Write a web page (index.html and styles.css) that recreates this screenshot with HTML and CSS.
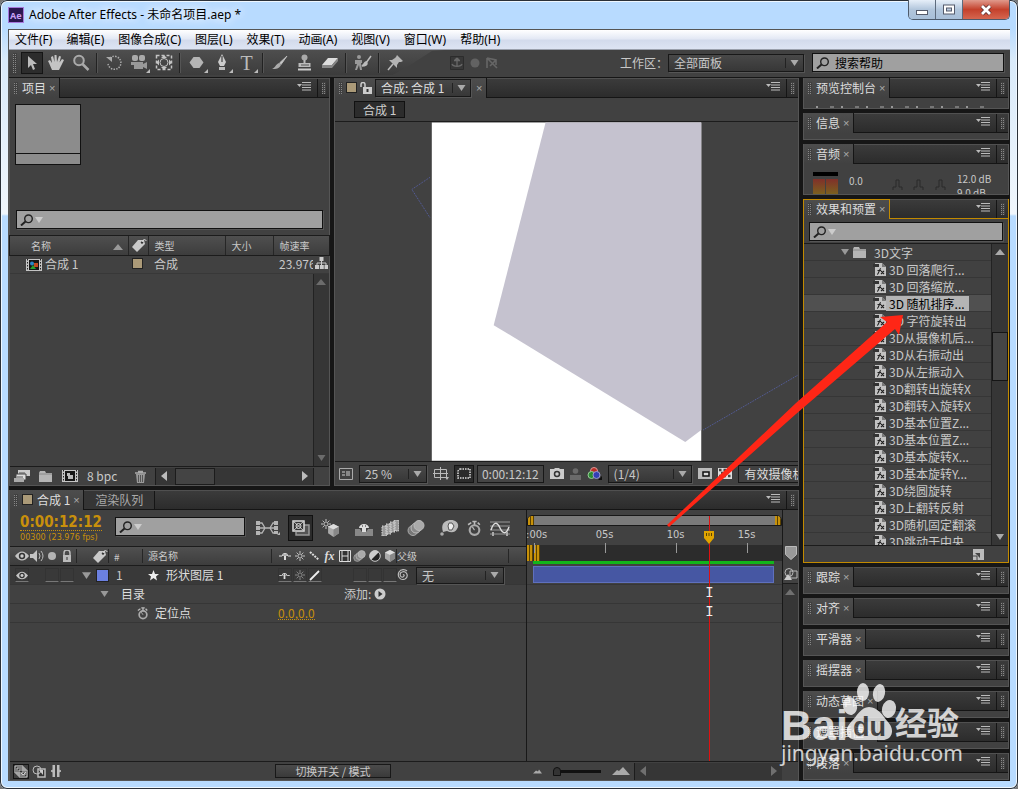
FILE: index.html
```html
<!DOCTYPE html>
<html lang="zh-CN">
<head>
<meta charset="utf-8">
<title>Adobe After Effects - 未命名项目.aep *</title>
<link rel="stylesheet" href="styles.css">
</head>
<body>
<svg class="sprite" aria-hidden="true">
  <symbol id="search" viewBox="0 0 14 12"><circle cx="8.5" cy="4.8" r="3.8" fill="none" stroke="#222" stroke-width="1.4"/><path d="M5.5 7.5L1 11.5" stroke="#222" stroke-width="2"/></symbol>
  <symbol id="menu" viewBox="0 0 14 9"><path d="M0 2h5L2.500 5z" fill="#bbb"/><path d="M5 .5h9M5 3h9M5 5.500h9M5 8h9" stroke="#bbb"/></symbol>
  <symbol id="down" viewBox="0 0 8 6"><path d="M0 0h8L4 6z" fill="currentColor"/></symbol>
  <symbol id="up" viewBox="0 0 10 6"><path d="M0 6h10L5 0z" fill="currentColor"/></symbol>
  <symbol id="left" viewBox="0 0 6 10"><path d="M6 0v10L0 5z" fill="currentColor"/></symbol>
  <symbol id="right" viewBox="0 0 6 10"><path d="M0 0v10l6-5z" fill="currentColor"/></symbol>
  <symbol id="folder" viewBox="0 0 14 11"><path d="M0 2l1-2h5l1 2h6v9H0z" fill="#b5b5b5"/><path d="M0 3h13" stroke="#888"/></symbol>
  <symbol id="tag" viewBox="0 0 16 13"><path d="M1 8L7 1l6 0 1 4-8 8z" fill="#c9c9c9"/><circle cx="11" cy="3.500" r="1.200" fill="#333"/><path d="M11 3C12 0 15 0 15 2" fill="none" stroke="#ddd"/></symbol>
  <symbol id="film" viewBox="0 0 16 12"><path d="M0 0h16v12H0z" fill="#c4c4c4"/><path d="M3 1h10v10H3z" fill="#161616"/><path d="M1.500 0v12M14.500 0v12" stroke="#222" stroke-dasharray="1.500 1.500"/></symbol>
  <symbol id="fx" viewBox="0 0 13 14"><path d="M2 1h7l4 4v9H2z" fill="#c2c2c2"/><path d="M9 1v4h4" fill="#777"/><path d="M0 2h6v3H0z" fill="#333"/><path d="M4 12.500c2 0 2-6 4-6M4.500 8.500h3.500M8 9l3 3M11 9l-3 3" fill="none" stroke="#222" stroke-width="1.100"/></symbol>
  <symbol id="eye" viewBox="0 0 14 10"><path d="M0 5Q7-4 14 5Q7 14 0 5z" fill="#c4c4c4"/><circle cx="7" cy="5" r="3.200" fill="#333"/><circle cx="7" cy="5" r="1.700" fill="#ccc"/></symbol>
  <symbol id="shy" viewBox="0 0 12 8"><path d="M0 4h3M9 4h3" stroke="#ddd"/><path d="M3 4a3 3 0 0 1 6 0H7v4H5V4z" fill="#ddd"/><path d="M4.500 3h1M6.500 3h1" stroke="#333"/></symbol>
  <symbol id="sun" viewBox="0 0 12 12"><circle cx="6" cy="6" r="2.500" fill="none" stroke="currentColor"/><path d="M6 0v2.500M6 9.500V12M0 6h2.500M9.500 6H12M2 2l1.500 1.500M8.500 8.500L10 10M10 2L8.500 3.500M2 10l1.500-1.500" stroke="currentColor"/></symbol>
  <symbol id="cube" viewBox="0 0 12 12"><path d="M6 0l5 2.500v6L6 12 1 8.500v-6z" fill="#aaa"/><path d="M6 0l5 2.500L6 5 1 2.500z" fill="#ddd"/><path d="M6 5v7l5-3.500v-6z" fill="#888"/></symbol>
  <symbol id="blur" viewBox="0 0 18 16"><circle cx="6" cy="10.500" r="5" fill="#777" stroke="#aaa"/><circle cx="9" cy="8" r="5" fill="#888" stroke="#bbb"/><circle cx="12" cy="5.500" r="5" fill="#aaa" stroke="#bbb"/></symbol>
  <symbol id="watch" viewBox="0 0 14 15"><circle cx="7" cy="9" r="4.500" fill="none" stroke="#aaa" stroke-width="2"/><path d="M5 1h4M7 1v3M1 4l3-2M10 2l2 2" stroke="#bbb" stroke-width="1.500"/><path d="M7 9l-2-3" stroke="#bbb"/></symbol>
  <symbol id="corner" viewBox="0 0 4 4"><path d="M4 0v4H0z" fill="#bbb"/></symbol>
</svg>

<div class="window">
  <header class="titlebar">
    <svg class="logo" viewBox="0 0 16 16"><rect width="16" height="16" fill="#2a1650"/><rect x=".5" y=".5" width="15" height="15" fill="none" stroke="#a678dc"/><text x="2" y="12" class="logo-text">Ae</text></svg>
    <h1>Adobe After Effects - 未命名项目.aep *</h1>
    <div class="caption">
      <button aria-label="最小化"><svg width="14" height="12" viewBox="0 0 14 12"><rect x="1.500" y="6.500" width="11" height="4" fill="#fff" stroke="#555b6b"/></svg></button>
      <button aria-label="最大化"><svg width="14" height="12" viewBox="0 0 14 12"><rect x="1.500" y="1" width="11" height="9" fill="#fff" stroke="#555b6b"/><rect x="4.500" y="4" width="5" height="3" fill="#b8c8dc" stroke="#555b6b"/></svg></button>
      <button class="close" aria-label="关闭"><svg width="14" height="12" viewBox="0 0 14 12"><path d="M3 2l8 8M11 2l-8 8" stroke="#5d3030" stroke-width="4.500"/><path d="M3 2l8 8M11 2l-8 8" stroke="#fff" stroke-width="2.800"/></svg></button>
    </div>
  </header>

  <div class="app">
    <nav class="menubar">
      <a href="#">文件(F)</a><a href="#">编辑(E)</a><a href="#">图像合成(C)</a><a href="#">图层(L)</a><a href="#">效果(T)</a><a href="#">动画(A)</a><a href="#">视图(V)</a><a href="#">窗口(W)</a><a href="#">帮助(H)</a>
    </nav>

    <div class="toolbar">
      <div class="tools">
      <i class="grip"></i>
      <button class="tool on" aria-label="选择"><svg width="18" height="18" viewBox="0 0 18 18"><path d="M5 2v12l3-3 2 5 2-1-2-5h4z" fill="#bbb"/></svg></button>
      <button class="tool" aria-label="手形"><svg width="18" height="18" viewBox="0 0 18 18"><path d="M5 16L2 9 1 7l2-1 2 3-1-6 2-1 1.500 6V1h2l.5 7L12 2l2 .5-1.500 6L15 5l2 1-3 6-2 4z" fill="#c4c4c4"/></svg></button>
      <button class="tool" aria-label="缩放"><svg width="18" height="18" viewBox="0 0 18 18"><circle cx="7" cy="6.500" r="4.800" fill="#555" stroke="#aaa" stroke-width="2"/><path d="M10.500 10l6 6" stroke="#aaa" stroke-width="2.500"/></svg></button>
      <i class="sep"></i>
      <button class="tool" aria-label="旋转"><svg width="18" height="18" viewBox="0 0 18 18"><path d="M5 4a6.500 6.500 0 1 1-2 6" fill="none" stroke="#aaa" stroke-width="1.500" stroke-dasharray="1.500 1.200"/><path d="M1 3h6v5z" fill="#aaa"/></svg></button>
      <button class="tool" aria-label="摄像机"><svg width="18" height="18" viewBox="0 0 18 18"><rect x="2" y="1" width="6" height="6" rx="2" fill="#aaa"/><rect x="9" y="1" width="6" height="6" rx="2" fill="#aaa"/><path d="M1 8h12v2l4-2v7l-4-2v2H4v-4H1z" fill="#999"/></svg><svg class="more"><use href="#corner"/></svg></button>
      <button class="tool" aria-label="定位点"><svg width="18" height="18" viewBox="0 0 18 18"><rect x="1.500" y="1.500" width="15" height="14" fill="none" stroke="#c4c4c4" stroke-width="1.500" stroke-dasharray="3 2"/><circle cx="9" cy="8.500" r="4" fill="none" stroke="#c4c4c4"/><path d="M9 1l3 3H6zM9 16l3-3H6zM1 8.500l3-3v6zM17 8.500l-3-3v6z" fill="#c4c4c4"/></svg></button>
      <i class="sep"></i>
      <button class="tool" aria-label="形状"><svg width="18" height="18" viewBox="0 0 18 18"><path d="M5.500 3h6l4 5.500-4 5.500h-6l-4-5.500z" fill="#b4b4b4"/></svg><svg class="more"><use href="#corner"/></svg></button>
      <button class="tool" aria-label="钢笔"><svg width="18" height="18" viewBox="0 0 18 18"><path d="M9 0l4 8-2 4H7L5 8z" fill="#ccc"/><path d="M9 2v6" stroke="#222"/><path d="M6 13h6v3H6z" fill="#bbb"/></svg><svg class="more"><use href="#corner"/></svg></button>
      <button class="tool type" aria-label="文字">T<svg class="more"><use href="#corner"/></svg></button>
      <i class="sep"></i>
      <button class="tool" aria-label="画笔"><svg width="18" height="18" viewBox="0 0 18 18"><path d="M16 2L8.500 9l1.500 1.500z" fill="#ccc" stroke="#bbb"/><path d="M8 9l2 2c-2 4-5 4-9 4 3-1 4-5 7-6z" fill="#aaa"/></svg></button>
      <button class="tool" aria-label="图章"><svg width="18" height="18" viewBox="0 0 18 18"><circle cx="8.500" cy="3.500" r="3" fill="#aaa"/><path d="M7.500 6h2v3h5v4h-12V9h5z" fill="#bbb"/><path d="M2 15.500h13" stroke="#ccc" stroke-width="2"/><path d="M5 11h8" stroke="#555"/></svg></button>
      <button class="tool" aria-label="橡皮"><svg width="18" height="18" viewBox="0 0 18 18"><path d="M7 4h10l-6 7H1z" fill="#ddd"/><path d="M1 11h10l6-7v3l-6 7H1z" fill="#888"/></svg></button>
      <i class="sep"></i>
      <button class="tool" aria-label="Roto"><svg width="18" height="18" viewBox="0 0 18 18"><circle cx="5" cy="3" r="2" fill="#999"/><path d="M1 6h7v3H7l1 7H6L5 11l-2 5H1l2-6H1z" fill="#999"/><path d="M17 2l-5 7M12 8c-2 1-2 3-4 4 4 0 5-1 5-3z" stroke="#bbb" stroke-width="1.500" fill="#bbb"/></svg></button>
      <i class="sep"></i>
      <button class="tool" aria-label="木偶"><svg width="18" height="18" viewBox="0 0 18 18"><path d="M10 1l6 6-2 1-2 0-2 3 0 3-8-8h3l3-2 1-1z" fill="#b4b4b4"/><path d="M6 10l-5 6" stroke="#bbb" stroke-width="1.500"/></svg><svg class="more"><use href="#corner"/></svg></button>
      </div>
      <div class="axes">
        <svg width="14" height="14" viewBox="0 0 14 14"><path d="M.5.5h13v13H.5z" fill="#383838" stroke="#2c2c2c"/><path d="M7 2v9M4 4.500h6M2 8c1 3 9 3 10 0M7 2L5 4M7 2l2 2" fill="none" stroke="#686868" stroke-width="1.300"/></svg>
        <svg width="10" height="10" viewBox="0 0 10 10"><circle cx="5" cy="5" r="4.500" fill="#626262"/></svg>
        <svg width="12" height="12" viewBox="0 0 12 12"><path d="M1 1l10 10M1 1v10M1 1l9 2v5M4 9l6-6" fill="none" stroke="#666" stroke-width="1.600"/></svg>
      </div>
      <label class="ws-label" for="ws">工作区：</label>
      <div class="drop ws"><select id="ws"><option>全部面板</option></select><svg><use href="#down"/></svg></div>
      <label class="search help"><svg><use href="#search"/></svg><input type="text" value="搜索帮助" aria-label="搜索帮助"></label>
    </div>

    <div class="workspace">
      <div class="main">
        <div class="upper">
          <section class="panel project">
            <div class="tabs"><div class="tab active"><i class="grip"></i>项目<button aria-label="关闭">×</button></div><span class="fill"></span><svg class="menu"><use href="#menu"/></svg><i class="end"><i class="grip"></i></i></div>
            <div class="preview"><div class="thumb"></div></div>
            <label class="search wide"><svg><use href="#search"/></svg><svg class="caret"><use href="#down"/></svg><input type="text" aria-label="搜索项目"></label>
            <table class="items">
              <thead><tr><th class="name">名称<svg width="12" height="6"><use href="#up"/></svg></th><th class="lab"><svg width="16" height="13"><use href="#tag"/></svg></th><th class="kind">类型</th><th class="size">大小</th><th class="rate">帧速率</th><th class="flow"></th></tr></thead>
              <tbody><tr><td class="name"><svg width="16" height="12" viewBox="0 0 16 12"><use href="#film"/><circle cx="6" cy="4.500" r="2" fill="#2a86c8"/><path d="M8 4h4v4H8z" fill="#c04a20"/><path d="M4 10l3-4 3 4z" fill="#27a030"/></svg>合成 1</td><td class="lab"><i class="swatch tan"></i></td><td>合成</td><td></td><td class="rate">23.976</td><td class="flow"><svg width="13" height="13" viewBox="0 0 13 13"><path d="M4.500 0h4v4h-4zM0 8h4v4H0zM4.800 8h4v4h-4zM9.500 8h3.500v4H9.500z" fill="#ccc"/><path d="M6.500 4v4M2 8V6h9v2" fill="none" stroke="#ccc"/></svg></td></tr></tbody>
            </table>
            <div class="void"><div class="vscroll"><svg width="10" height="6"><use href="#up"/></svg><svg width="9" height="6"><use href="#down"/></svg></div></div>
            <div class="pfoot">
              <svg width="16" height="12" viewBox="0 0 16 12"><path d="M4 0h12v6H4z" fill="#ccc"/><path d="M2 4h10v6H2z" fill="#ddd" stroke="#444"/><path d="M0 8h10v4H0z" fill="#aaa"/><path d="M5 3h6M3 7h6" stroke="#555"/></svg>
              <svg width="14" height="11"><use href="#folder"/></svg>
              <svg width="16" height="12" viewBox="0 0 16 12"><use href="#film"/><path d="M5 3h3v2h3v4H6V6H5z" fill="#bbb"/></svg>
              <button class="bpc">8 bpc</button>
              <svg width="11" height="13" viewBox="0 0 11 13"><path d="M0 3h11M3 1.500h5" stroke="#aaa" stroke-width="1.500"/><path d="M1 4h9l-1 9H2z" fill="#999"/><path d="M3.500 5v7M5.500 5v7M7.500 5v7" stroke="#555"/></svg>
              <div class="hscroll"><svg width="6" height="10"><use href="#left"/></svg><i class="thumbbar"></i><svg width="6" height="10"><use href="#right"/></svg></div>
            </div>
          </section>

          <section class="panel comp">
            <div class="tabs"><div class="tab active"><i class="grip"></i><i class="swatch tan"></i><svg width="12" height="12" viewBox="0 0 12 12"><path d="M1 5V2.500a2 2 0 0 1 4 0V6" fill="none" stroke="#ccc" stroke-width="1.500"/><path d="M3 5h9v7H3z" fill="#ccc"/><path d="M7.500 7v3" stroke="#333" stroke-width="2"/></svg><div class="drop title"><select aria-label="合成"><option>合成: 合成 1</option></select><svg><use href="#down"/></svg></div><button aria-label="关闭">×</button></div><span class="fill"></span><svg class="menu"><use href="#menu"/></svg><i class="end"><i class="grip"></i></i></div>
            <div class="crumbs"><button>合成 1</button></div>
            <svg class="viewer" viewBox="334 123 464 339" preserveAspectRatio="xMidYMid meet"><path d="M431 123h270v339H431z" fill="#fff"/><path d="M545 123h156v308l-16 12-192-117z" fill="#c5c2cf"/><path d="M429 178l-18 12 18 28M703 431l95-55" fill="none" stroke="#5660a8" stroke-dasharray="1 1"/></svg>
            <div class="cfoot">
              <svg width="14" height="12" viewBox="0 0 14 12"><path d="M.5.5h13v11H.5z" fill="none" stroke="#aaa"/><path d="M3 3h3v2H3zM7 3h4v5H7zM3 6h3v2H3z" fill="#888"/></svg>
              <div class="drop zoom"><select aria-label="缩放"><option>25 %</option></select><svg><use href="#down"/></svg></div>
              <svg width="16" height="13" viewBox="0 0 16 13"><path d="M1.500 2.500h12v8h-12zM7.500 0v13M0 6.500h15" fill="none" stroke="#bbb"/><path d="M12 10h4l-2 3z" fill="#bbb"/></svg>
              <button class="mask" aria-label="遮罩"><svg width="14" height="11" viewBox="0 0 14 11"><path d="M3 1h10v9H1V3z" fill="none" stroke="#ddd" stroke-width="1.500" stroke-dasharray="1.500 1"/></svg></button>
              <button class="time">0:00:12:12</button>
              <svg width="14" height="11" viewBox="0 0 14 11"><path d="M0 1h4l1-1h4l1 1h4v10H0z" fill="#ccc"/><circle cx="7" cy="6" r="2.500" fill="none" stroke="#333" stroke-width="1.500"/></svg>
              <svg width="11" height="12" viewBox="0 0 11 12"><circle cx="5.500" cy="3" r="2.800" fill="#6a6a6a"/><path d="M0 12V7h11v5z" fill="#6a6a6a"/></svg>
              <svg width="15" height="13" viewBox="0 0 15 13"><circle cx="7" cy="4" r="3.500" fill="#b92d24" stroke="#d99"/><circle cx="4.500" cy="8" r="3.500" fill="#2b8b31" stroke="#9c9"/><circle cx="9.500" cy="8" r="3.500" fill="#3340b5" stroke="#99c"/><path d="M15 9v4h-4z" fill="#111"/></svg>
              <div class="drop res"><select aria-label="分辨率"><option>(1/4)</option></select><svg><use href="#down"/></svg></div>
              <svg width="14" height="11" viewBox="0 0 14 11"><path d="M0 0h14v11H0z" fill="#bbb"/><path d="M5 4h6v4H5z" fill="#ddd" stroke="#111" stroke-width="1.500"/></svg>
              <svg width="14" height="11" viewBox="0 0 14 11"><path d="M0 0h14v11H0z" fill="#ddd"/><path d="M1 2h12M1 8h12" stroke="#444" stroke-width="2.500" stroke-dasharray="2.500 2"/><path d="M3 5h9" stroke="#444" stroke-width="2.500" stroke-dasharray="2.500 2"/></svg>
              <button class="camview">有效摄像机</button>
            </div>
          </section>
        </div>

        <section class="panel timeline">
          <div class="tabs"><div class="tab active"><i class="grip"></i><i class="swatch tan"></i>合成 1<button aria-label="关闭">×</button></div><div class="tab queue">渲染队列</div><span class="fill"></span><svg class="menu"><use href="#menu"/></svg><i class="end"><i class="grip"></i></i></div>
          <div class="tl">
            <div class="layers">
              <div class="tlhead">
                <div class="clock"><button class="tc">0:00:12:12</button><span>00300 (23.976 fps)</span></div>
                <label class="search"><svg><use href="#search"/></svg><svg class="caret"><use href="#down"/></svg><input type="text" aria-label="搜索图层"></label>
                <div class="switches">
                  <button aria-label="流程图"><svg width="24" height="14" viewBox="0 0 24 14"><path d="M3 2h3l3 5-3 5H3M3 7h12M21 2h-4l-3 5 3 5h4M15 7h6" fill="none" stroke="#b4b4b4" stroke-width="1.300"/><path d="M0 0h4v4H0zM0 5h4v4H0zM0 10h4v4H0zM18 0h4v4h-4zM18 5h4v4h-4zM18 10h4v3h-4zM24 11v3h-3z" fill="#b4b4b4"/></svg></button>
                  <button class="live" aria-label="动态更新"><svg width="18" height="16" viewBox="0 0 18 16"><path d="M8 5h9v10H4v-3" fill="#555" stroke="#999" stroke-width="1.500"/><path d="M1 1h11v10H1z" fill="#333" stroke="#ddd" stroke-width="1.500"/><path d="M1 1l11 10M12 1L1 11" stroke="#ccc"/><circle cx="6.500" cy="6" r="2.500" fill="none" stroke="#ddd"/></svg></button>
                  <button aria-label="草图3D"><svg width="19" height="18" viewBox="0 0 19 18"><use href="#sun" x="0" y="0" width="10" height="10" color="#ddd"/><use href="#cube" x="6" y="5" width="13" height="13"/></svg></button>
                  <button class="gap" aria-label="隐藏"><svg width="18" height="15" viewBox="0 0 18 15"><path d="M4 7a5 4 0 0 1 10 0h-3v4H7V7z" fill="#ddd"/><path d="M7 5h1M10 5h1" stroke="#222"/><path d="M0 8h5l2 3h4l2-3h5v7H0z" fill="#888"/></svg></button>
                  <button aria-label="帧融合"><svg width="18" height="16" viewBox="0 0 18 16"><path d="M1 6h5v10H1zM5 4h5v10H5zM9 2h5v10H9zM13 0h5v11h-5z" fill="#999" stroke="#ddd" stroke-dasharray="1.500 1"/></svg></button>
                  <button aria-label="运动模糊"><svg width="18" height="16"><use href="#blur"/></svg></button>
                  <button class="gap" aria-label="头脑风暴"><svg width="19" height="16" viewBox="0 0 19 16"><path d="M3 12C0 3 6 0 11 0c6 0 9 5 6 9-2 4-6 4-10 2z" fill="#bbb"/><path d="M9 3h3l2 3-2 4H9L8 6z" fill="#eee" stroke="#555"/><circle cx="2" cy="14" r="1.800" fill="#aaa"/></svg></button>
                  <button aria-label="自动关键帧"><svg width="15" height="17"><use href="#watch"/></svg></button>
                  <button aria-label="图形编辑器"><svg width="20" height="15" viewBox="0 0 20 15"><path d="M0 1h20M0 13h20M0 5h20M0 9h20" stroke="#999"/><path d="M1 9C4 0 7 1 10 7s6 7 9-1" fill="none" stroke="#ddd" stroke-width="1.500"/><path d="M3 11v4M17 11v4" stroke="#aaa" stroke-width="2"/></svg></button>
                </div>
              </div>
              <div class="cols head">
                <div class="av"><svg width="14" height="10"><use href="#eye"/></svg><svg width="14" height="12" viewBox="0 0 14 12"><path d="M0 4h3l4-4v12L3 8H0z" fill="#c4c4c4"/><path d="M9 3q2 3 0 6M11 1q4 5 0 10" fill="none" stroke="#bbb"/></svg><svg width="8" height="8" viewBox="0 0 8 8"><circle cx="4" cy="4" r="4" fill="#b4b4b4"/></svg><svg width="10" height="12" viewBox="0 0 10 12"><path d="M2 6V3a3 3 0 0 1 6 0v3" fill="none" stroke="#bbb" stroke-width="1.500"/><path d="M1 5h8v7H1z" fill="#bbb"/><path d="M5 7v3" stroke="#333"/></svg></div>
                <div class="tagcell"><svg width="16" height="13"><use href="#tag"/></svg></div>
                <div class="num">#</div><div class="src">源名称</div>
                <div class="sw"><i><svg width="12" height="8"><use href="#shy"/></svg></i><i><svg width="10" height="10"><use href="#sun"/></svg></i><i><svg width="12" height="10" viewBox="0 0 12 10"><path d="M1 1l9 8" stroke="#ddd" stroke-width="2" stroke-dasharray="2 1"/></svg></i><i class="fxi">fx</i><i><svg width="12" height="12" viewBox="0 0 12 12"><path d="M.5.500h11v11H.5z" fill="#333" stroke="#ddd"/><path d="M3 0v12M9 0v12M3 6h6" stroke="#ddd"/></svg></i><i><svg width="13" height="12"><use href="#blur"/></svg></i><i><svg width="12" height="12" viewBox="0 0 12 12"><circle cx="6" cy="6" r="5.300" fill="#222" stroke="#ccc"/><path d="M10 2A5.500 5.500 0 0 0 2 10z" fill="#ccc"/></svg></i><i><svg width="12" height="12"><use href="#cube"/></svg></i></div>
                <div class="par">父级</div><div></div>
              </div>
              <div class="cols layer">
                <div class="av"><button aria-label="显示"><svg width="12" height="9"><use href="#eye"/></svg></button><span></span><button aria-label="独奏"></button><button aria-label="锁定"></button></div>
                <div class="tagcell"><svg width="9" height="7"><use href="#down"/></svg><i class="swatch blue"></i></div>
                <div class="num">1</div>
                <div class="src"><svg width="11" height="11" viewBox="0 0 11 11"><path d="M5.500 0L7 4h4L8 6.500l1 4L5.500 8 2 10.500l1-4L0 4h4z" fill="#eee"/></svg>形状图层 1</div>
                <div class="sw"><button aria-label="退缩"><svg width="11" height="7"><use href="#shy"/></svg></button><button aria-label="折叠"><svg class="dim" width="10" height="10"><use href="#sun"/></svg></button><button aria-label="质量"><svg width="11" height="11" viewBox="0 0 11 11"><path d="M1 10L10 1" stroke="#eee" stroke-width="1.800"/></svg></button><span></span><span></span><button aria-label="运动模糊"></button><button aria-label="调节"></button><button aria-label="3D"></button></div>
                <div class="par"><svg width="12" height="12" viewBox="0 0 12 12"><path d="M6 6c1-1 2 1 0 2-3 1-4-4-1-5 5-2 7 5 3 7-5 2-8-3-6-7 2-3 6-3 8-1" fill="none" stroke="#bbb" stroke-width="1.200"/></svg><div class="drop"><select aria-label="父级"><option>无</option></select><svg><use href="#down"/></svg></div></div><div></div>
              </div>
              <div class="cols prop"><div></div><div class="tagcell twirl"><svg width="9" height="6"><use href="#down"/></svg></div><div class="wide2">目录</div><div class="add">添加:<button aria-label="添加"><svg width="12" height="12" viewBox="0 0 12 12"><circle cx="6" cy="6" r="5.500" fill="#ccc"/><path d="M4.500 3v6l4-3z" fill="#333"/></svg></button></div></div>
              <div class="cols prop"><div></div><div></div><div class="wide2 anchor"><svg width="12" height="13"><use href="#watch"/></svg>定位点</div><div class="value"><button>0.0</button>,<button>0.0</button></div></div>
            </div>

            <div class="time-area">
              <div class="navigator"><i></i><i></i></div>
              <div class="ruler"><span>0:00s</span><span>05s</span><span>10s</span><span>15s</span></div>
              <div class="workarea"><i></i><i></i></div>
              <div class="track"><div class="cache"></div><div class="bar"></div></div>
              <div class="keys"></div><div class="keys"></div>
              <div class="playhead"><svg width="12" height="14" viewBox="0 0 12 14"><path d="M1 1h10v7l-5 6-5-6z" fill="#e0a400"/><path d="M3.500 3v3M6 3v3M8.500 3v3" stroke="#5c4200"/></svg><b>I</b><b>I</b></div>
            </div>
            <div class="side"><svg class="marker" width="12" height="14" viewBox="0 0 12 14"><path d="M.5.500h11v8L6 13.500.5 8.500z" fill="#999" stroke="#bbb"/></svg><svg class="cbtn" width="14" height="12" viewBox="0 0 14 12"><path d="M6 3h7v7H6z" fill="none" stroke="#bbb"/><circle cx="5" cy="4.500" r="4" fill="none" stroke="#bbb"/><path d="M0 12l4-6 4 6z" fill="#ccc"/></svg><div class="sidebar"><svg width="10" height="6"><use href="#up"/></svg></div></div>
          </div>
          <div class="tlfoot">
            <div class="modes"><svg class="boxed" width="14" height="13" viewBox="0 0 14 13"><path d="M1 1h8v7H1zM3 3h8v7H3zM5 5h8v7H5z" fill="#333" stroke="#ccc"/><path d="M7 8l2 2 3-3" fill="none" stroke="#ccc"/></svg><svg width="14" height="13" viewBox="0 0 14 13"><path d="M6 4h7v8H6z" fill="#333" stroke="#bbb" stroke-width="1.500"/><circle cx="5" cy="5" r="4" fill="none" stroke="#bbb"/><path d="M7 5h4v5z" fill="#ccc"/></svg><svg width="12" height="12" viewBox="0 0 12 12"><path d="M4.500 0H3v5L1 6l2 1v5h1.500zM7.500 0H9v5l2 1-2 1v5H7.500z" fill="#bbb" stroke="#bbb"/></svg></div>
            <button class="toggle">切换开关 / 模式</button>
            <div class="zoomer"><svg width="9" height="5" viewBox="0 0 9 5"><path d="M0 4.500l3-3 2 1 1-2 3 4z" fill="#aaa"/></svg><input type="range" min="0" max="100" value="0" aria-label="时间缩放"><svg width="18" height="8" viewBox="0 0 18 8"><path d="M0 8l5-5 2 1 4-4 7 8z" fill="#aaa"/></svg></div>
            <div class="hscroll"><svg width="6" height="10"><use href="#left"/></svg><svg width="6" height="10"><use href="#right"/></svg></div>
          </div>
        </section>
      </div>

      <aside class="rail">
        <section class="panel prev"><div class="tabs"><div class="tab active"><i class="grip"></i>预览控制台<button aria-label="关闭">×</button></div><span class="fill"></span><svg class="menu"><use href="#menu"/></svg><i class="end"><i class="grip"></i></i></div><div class="stub"></div></section>
        <section class="panel small"><div class="tabs"><div class="tab active"><i class="grip"></i>信息<button aria-label="关闭">×</button></div><span class="fill"></span><svg class="menu"><use href="#menu"/></svg><i class="end"><i class="grip"></i></i></div></section>
        <section class="panel audio"><div class="tabs"><div class="tab active"><i class="grip"></i>音频<button aria-label="关闭">×</button></div><span class="fill"></span><svg class="menu"><use href="#menu"/></svg><i class="end"><i class="grip"></i></i></div>
          <div class="levels"><div class="meter"><i></i><i></i></div><span class="zero">0.0</span><svg width="54" height="12" viewBox="0 0 54 12"><path d="M1 12V9h3V2h3v7h3v3M22 12V9h3V2h3v7h3v3M44 12V9h3V2h3v7h3v3" fill="none" stroke="#2a2a2a"/></svg><span class="db">12.0 dB<br>9.0 dB</span></div></section>
        <section class="panel effects"><div class="tabs"><div class="tab active"><i class="grip"></i>效果和预置<button aria-label="关闭">×</button></div><span class="fill"></span><svg class="menu"><use href="#menu"/></svg><i class="end"><i class="grip"></i></i></div>
          <label class="search wide"><svg><use href="#search"/></svg><svg class="caret"><use href="#down"/></svg><input type="text" aria-label="搜索效果"></label>
          <div class="browser">
            <ul>
              <li class="group"><svg class="tw" width="8" height="6"><use href="#down"/></svg><svg width="14" height="11"><use href="#folder"/></svg><span>3D文字</span></li>
              <li><svg><use href="#fx"/></svg><span>3D 回落爬行...</span></li>
              <li><svg><use href="#fx"/></svg><span>3D 回落缩放...</span></li>
              <li class="sel"><svg><use href="#fx"/></svg><span>3D 随机排序...</span></li>
              <li><svg><use href="#fx"/></svg><span>3D 字符旋转出</span></li>
              <li><svg><use href="#fx"/></svg><span>3D从摄像机后...</span></li>
              <li><svg><use href="#fx"/></svg><span>3D从右振动出</span></li>
              <li><svg><use href="#fx"/></svg><span>3D从左振动入</span></li>
              <li><svg><use href="#fx"/></svg><span>3D翻转出旋转X</span></li>
              <li><svg><use href="#fx"/></svg><span>3D翻转入旋转X</span></li>
              <li><svg><use href="#fx"/></svg><span>3D基本位置Z...</span></li>
              <li><svg><use href="#fx"/></svg><span>3D基本位置Z...</span></li>
              <li><svg><use href="#fx"/></svg><span>3D基本旋转X...</span></li>
              <li><svg><use href="#fx"/></svg><span>3D基本旋转Y...</span></li>
              <li><svg><use href="#fx"/></svg><span>3D绕圆旋转</span></li>
              <li><svg><use href="#fx"/></svg><span>3D上翻转反射</span></li>
              <li><svg><use href="#fx"/></svg><span>3D随机固定翻滚</span></li>
              <li><svg><use href="#fx"/></svg><span>3D跳动于中央</span></li>
            </ul>
            <div class="vscroll"><svg width="10" height="6"><use href="#up"/></svg><i class="thumbbar"></i><svg width="10" height="6"><use href="#down"/></svg></div>
          </div>
          <div class="efoot"><svg width="11" height="11" viewBox="0 0 11 11"><path d="M0 0h11v11H0z" fill="#bbb"/><path d="M2 4l5 0v5z" fill="#444"/><path d="M0 7h4v4" fill="none" stroke="#444"/></svg></div>
        </section>
        <section class="panel small"><div class="tabs"><div class="tab active"><i class="grip"></i>跟踪<button aria-label="关闭">×</button></div><span class="fill"></span><svg class="menu"><use href="#menu"/></svg><i class="end"><i class="grip"></i></i></div></section>
        <section class="panel small"><div class="tabs"><div class="tab active"><i class="grip"></i>对齐<button aria-label="关闭">×</button></div><span class="fill"></span><svg class="menu"><use href="#menu"/></svg><i class="end"><i class="grip"></i></i></div></section>
        <section class="panel small"><div class="tabs"><div class="tab active"><i class="grip"></i>平滑器<button aria-label="关闭">×</button></div><span class="fill"></span><svg class="menu"><use href="#menu"/></svg><i class="end"><i class="grip"></i></i></div></section>
        <section class="panel small"><div class="tabs"><div class="tab active"><i class="grip"></i>摇摆器<button aria-label="关闭">×</button></div><span class="fill"></span><svg class="menu"><use href="#menu"/></svg><i class="end"><i class="grip"></i></i></div></section>
        <section class="panel small"><div class="tabs"><div class="tab active"><i class="grip"></i>动态草图<button aria-label="关闭">×</button></div><span class="fill"></span><svg class="menu"><use href="#menu"/></svg><i class="end"><i class="grip"></i></i></div></section>
        <section class="panel small"><div class="tabs"><div class="tab active"><i class="grip"></i>遮罩插值<button aria-label="关闭">×</button></div><span class="fill"></span><svg class="menu"><use href="#menu"/></svg><i class="end"><i class="grip"></i></i></div></section>
        <section class="panel small"><div class="tabs"><div class="tab active"><i class="grip"></i>段落<button aria-label="关闭">×</button></div><span class="fill"></span><svg class="menu"><use href="#menu"/></svg><i class="end"><i class="grip"></i></i></div></section>
      </aside>
    </div>
  </div>

  <svg class="arrow" viewBox="0 0 240 216" aria-hidden="true"><path d="M0 210L129 88 220 7l-7-5 23-2-4 20-4-6L129 99 2 212z" fill="#ff2616"/></svg>
  <svg class="watermark" viewBox="0 0 186 92" aria-hidden="true">
    <text x="0" y="58" class="wm-bai">Bai</text>
    <g><ellipse cx="69" cy="24" rx="7" ry="9" transform="rotate(-15 69 24)"/><ellipse cx="82" cy="10" rx="6" ry="9"/><ellipse cx="98" cy="11" rx="6" ry="9" transform="rotate(12 98 11)"/><ellipse cx="108" cy="27" rx="7" ry="9" transform="rotate(15 108 27)"/><path d="M88 25c9 0 14 9 19 15 8 9 3 18-5 18H76c-10 0-14-9-6-18 6-6 10-15 18-15z"/></g>
    <text x="72" y="54" class="wm-du">du</text>
    <text x="114" y="53" class="wm-cn">经验</text>
    <text x="0" y="79" class="wm-url">jingyan.baidu.com</text>
  </svg>
</div>
</body>
</html>
```
FILE: styles.css
```css
* { box-sizing: border-box; }
body {
  margin: 0;
  background: #777;
  color: #c8c8c8;
  font: 12px/16px "Noto Sans CJK SC", "Noto Sans", sans-serif;
}
button, input, select {
  font: inherit;
  color: inherit;
  margin: 0;
  padding: 0;
  border: 0;
  background: none;
  appearance: none;
  outline: 0;
}
i { font-style: normal; }
svg { display: block; flex: none; }
.sprite { position: absolute; width: 0; height: 0; }

/* window frame */
.window {
  position: relative;
  display: flex;
  flex-direction: column;
  min-height: 100vh;
  padding: 0 8px 8px;
  border-radius: 7px;
  background: linear-gradient(#b8dbff 0 28px, #d9eafa 60px, #f0f6fc 214px, #b8dbff 216px);
  box-shadow: inset 0 0 0 1px #2a3038, inset 0 0 0 2px #eef7ff;
}
.titlebar {
  display: flex;
  align-items: center;
  height: 29px;
  color: #000;
}
.logo { width: 16px; height: 16px; }
.logo-text { font: bold 9px "Noto Sans", sans-serif; fill: #c9a0f5; }
.titlebar h1 {
  margin: 0 0 0 5px;
  font: 12px/20px "Noto Sans", "Noto Sans CJK SC", sans-serif;
  text-shadow: 0 0 8px #fff, 0 0 12px #fff;
}
.caption {
  display: flex;
  align-self: flex-start;
  margin-left: auto;
  height: 20px;
  border: 1px solid #4d5a6b;
  border-top: 0;
  border-radius: 0 0 5px 5px;
  overflow: hidden;
}
.caption button {
  display: grid;
  place-items: center;
  width: 27px;
  background: linear-gradient(#e6eff9, #b2c6dc 50%, #a8bfd8);
  border-right: 1px solid #5d6b7d;
}
.caption .close { width: 46px; border: 0; background: linear-gradient(#e09a8c, #c4412c 50%, #d5664f); }

.app {
  flex: 1;
  display: flex;
  flex-direction: column;
  background: #161616;
  border: 1px solid #555;
  border-width: 1px 0 0 1px;
}
.menubar {
  display: flex;
  gap: 14px;
  height: 20px;
  padding: 0 6px;
  background: linear-gradient(#fff, #e4e9f5 45%, #d3dbec 55%, #dde4f3);
  border-bottom: 1px solid #9aa0ac;
  font: 12px/20px "Noto Sans", "Noto Sans CJK SC", sans-serif;
}
.menubar a { color: #000; text-decoration: none; }

/* toolbar */
.toolbar { display: flex; align-items: center; height: 27px; background: #414141; padding: 0 6px 2px 0; }
.tools {
  display: flex;
  align-items: center;
  height: 25px;
  width: 436px;
  padding-left: 4px;
  background: linear-gradient(#4e4e4e, #3c3c3c);
  clip-path: polygon(0 0, 100% 0, 97% 4%, 92% 60%, 88% 100%, 0 100%);
}
.grip {
  flex: none;
  width: 4px;
  height: 12px;
  background: linear-gradient(#404040 1px, transparent 1px) 0 0 / 2px 2px, linear-gradient(90deg, #888 1px, #404040 1px) 0 0 / 2px 2px;
}
.tools > .grip { height: 20px; margin-right: 4px; }
.tool { position: relative; display: grid; place-items: center; width: 25px; height: 22px; }
.tool.on { width: 22px; background: #2c2c2c; border: 1px solid #151515; }
.tool.type { font: 20px/22px "Liberation Serif", serif; color: #bbb; }
.more { position: absolute; right: 1px; bottom: 1px; width: 4px; height: 4px; }
.sep { width: 1px; height: 20px; margin: 0 4px 0 3px; background: #222; box-shadow: 1px 0 #555; }
.axes { display: flex; align-items: center; gap: 6px; margin-left: 5px; }
.ws-label { margin-left: auto; white-space: nowrap; }
.ws { width: 136px; }
.help { width: 192px; margin-left: 8px; }

.drop { position: relative; height: 18px; background: linear-gradient(#484848, #373737); border: 1px solid #181818; box-shadow: 1px 1px #555; }
.drop select { display: block; width: 100%; height: 16px; padding: 0 22px 0 5px; line-height: 16px; }
.drop svg { position: absolute; right: 4px; top: 5px; width: 9px; height: 6px; color: #aaa; pointer-events: none; }
.drop::after { content: ""; position: absolute; right: 17px; top: 3px; bottom: 3px; border-left: 1px solid #222; }

.search { display: flex; align-items: center; height: 19px; background: #a0a0a0; border: 1px solid #111; box-shadow: 1px 1px #555; padding-left: 3px; }
.search svg { width: 14px; height: 12px; }
.search .caret { width: 8px; height: 6px; color: #ccc; margin-left: 1px; }
.search input { flex: 1; min-width: 0; padding-left: 5px; color: #000; height: 16px; line-height: 16px; }

/* panels */
.workspace { flex: 1; display: flex; gap: 4px; padding: 1px 1px 0 0; }
.main { flex: 1; min-width: 0; display: flex; flex-direction: column; gap: 4px; }
.upper { flex: 409 1 0; min-height: 0; display: flex; gap: 4px; }
.panel { display: flex; flex-direction: column; background: #414141; border: 1px solid #555; border-width: 0 1px 1px; min-width: 0; }
.project { flex: 321 1 0; }
.comp { flex: 466 1 0; }
.tabs { display: flex; flex: none; height: 20px; background: linear-gradient(#3b3b3b, #2c2c2c); border-bottom: 1px solid #151515; border-top: 1px solid #505050; }
.tab { display: flex; align-items: center; gap: 4px; height: 18px; padding: 0 4px; background: linear-gradient(#4d4d4d, #414141); border-right: 1px solid #151515; white-space: nowrap; }
.tab.active { height: 20px; margin-top: -1px; padding-bottom: 1px; color: #ddd; }
.tab > button { color: #aaa; font: 11px/14px "Liberation Sans", sans-serif; width: 6px; margin-left: -1px; }
.fill { flex: 1; }
.menu { width: 14px; height: 9px; margin: 3px 6px 0 0; }
.end { display: flex; align-items: center; padding-left: 4px; width: 12px; border-left: 1px solid #151515; }
.swatch { display: block; width: 11px; height: 11px; border: 1px solid #222; }
.tan { background: #ab9a78; }
.blue { background: #6b80e0; width: 13px; height: 13px; }

/* project */
.preview { padding: 6px 5px 0; height: 112px; flex: none; }
.thumb { width: 66px; height: 61px; border: 1px solid #111; background: linear-gradient(#8c8c8c 48px, #111 48px 49px, #8c8c8c 49px); }
.wide { flex: none; margin: 0 6px; }
.items { width: 100%; margin-top: 7px; border-collapse: collapse; table-layout: fixed; }
.items thead tr { height: 19px; background: linear-gradient(#4f4f4f, #3d3d3d); outline: 1px solid #1c1c1c; }
.items th { padding: 0 0 0 6px; font-weight: normal; font-size: 10px; text-align: left; border-right: 1px solid #262626; }
.items td { padding: 0 0 0 6px; height: 18px; border-bottom: 1px solid #383838; }
.items .name { width: 118px; padding-left: 16px; }
.items td.name svg { display: inline-block; vertical-align: -2px; margin-right: 3px; }
.items th.name { padding-left: 21px; }
.items th.name svg { float: right; margin: 6px 4px 0 0; color: #999; }
.items .lab { width: 20px; padding-left: 2px; }
.items td.lab { padding-left: 4px; }
.items .kind { width: 77px; }
.items .size { width: 48px; }
.items .rate { white-space: nowrap; overflow: hidden; border-right: 0; }
.items .flow { width: 16px; padding-left: 2px; border-right: 0; }
.void { flex: 1; display: flex; justify-content: flex-end; }
.vscroll { display: flex; flex-direction: column; align-items: center; justify-content: space-between; width: 16px; padding: 5px 0; background: #363636; border-left: 1px solid #222; color: #6c6c6c; }
.pfoot { display: flex; align-items: center; gap: 9px; height: 19px; padding-left: 4px; border-top: 1px solid #1c1c1c; }
.bpc { margin-right: 9px; }
.hscroll { flex: 1; display: flex; align-items: center; justify-content: space-between; height: 17px; margin-left: 3px; padding: 0 5px; background: #363636; border-left: 1px solid #1c1c1c; color: #bbb; }
.pfoot .hscroll { margin-left: 0; margin-right: 15px; border-right: 1px solid #1c1c1c; }
.pfoot .thumbbar { width: 40px; height: 17px; background: #444; border: 1px solid #1c1c1c; margin-right: auto; margin-left: 8px; }

/* composition */
.title { width: 96px; }
.title select { padding-right: 18px; }
.comp .tab { gap: 3px; }
.comp .tab > button { margin-left: 2px; }
.crumbs { flex: none; padding: 3px 19px 0; height: 24px; border-bottom: 1px solid #1c1c1c; }
.crumbs button { height: 17px; padding: 0 8px; background: #2c2c2c; border: 1px solid #111; line-height: 14px; color: #ccc; }
.viewer { width: 100%; flex: 1 1 0; min-height: 0; }
.cfoot { flex: none; display: flex; align-items: center; height: 24px; padding-left: 4px; border-top: 1px solid #1c1c1c; overflow: hidden; gap: 6px; }
.cfoot > .drop, .time, .mask, .camview { flex: none; }
.zoom { width: 68px; }
.mask { display: grid; place-items: center; width: 20px; height: 18px; background: #2b2b2b; border: 1px solid #151515; margin: 0 -3px 0 -1px; }
.time { height: 18px; padding: 0 4px; background: #454545; border: 1px solid #181818; line-height: 14px; }
.res { width: 84px; }
.camview { height: 18px; border: 1px solid #181818; padding: 0 6px; line-height: 14px; color: #ddd; }

/* timeline */
.timeline { flex: 290 1 0; }
.queue { padding: 0 11px; background: #353535; color: #aaa; }
.tl { flex: 1; display: grid; grid-template-columns: minmax(0, 516fr) minmax(0, 256fr) 16px; }
.tlhead { display: flex; height: 36px; align-items: center; padding-left: 10px; }
.clock { width: 95px; color: #c8900c; font: 9px/12px "DejaVu Sans Condensed", "Noto Sans", sans-serif; white-space: nowrap; }
.tc { display: block; font: bold 15px/16px "DejaVu Sans Condensed", "Noto Sans", sans-serif; border-bottom: 1px dotted #c8900c; }
.tlhead .search { width: 130px; margin-bottom: 3px; }
.switches { display: flex; align-items: center; gap: 8px; margin-left: 11px; }
.switches button { display: grid; place-items: center; }
.switches .gap { margin-left: 7px; }
.live { width: 25px; height: 26px; background: #2b2b2b; border: 1px solid #111; }
.cols { display: grid; grid-template-columns: 67px 32px 34px minmax(0, 1fr) 125px 112px 17px; height: 19px; border-bottom: 1px solid #363636; align-items: center; }
.cols.head { height: 20px; background: linear-gradient(#505050, #3d3d3d); border: 1px solid #1c1c1c; border-width: 1px 0; font-size: 10px; }
.cols.head > div:not(:last-child) { border-right: 1px solid #262626; height: 14px; align-items: center; }
.cols.head > .sw { border: 0; }
.av { display: grid; grid-template-columns: repeat(4, 15px); padding-left: 4px; place-items: center; }
.av button, .sw button { display: grid; place-items: center; width: 14px; height: 14px; border: 1px solid #333; border-bottom-color: #777; }
.tagcell { display: flex; align-items: center; justify-content: flex-end; gap: 5px; color: #999; }
.num { padding-left: 5px; }
.layer .num { padding-left: 7px; }
.src { display: flex; align-items: center; gap: 7px; padding-left: 5px; white-space: nowrap; color: #ddd; }
.head .src { color: inherit; }
.sw { display: grid; grid-template-columns: repeat(8, 15px); place-items: center; padding-left: 5px; color: #ddd; }
.dim { color: #999; }
.fxi { font: italic bold 12px/12px "Liberation Serif", serif; }
.layer { background: #393939; }
.par { display: flex; align-items: center; }
.par .drop { width: 88px; height: 17px; margin-left: 7px; }
.par select { height: 15px; line-height: 15px; }
.par .drop svg { top: 4px; }
.wide2 { grid-column: 3 / 5; padding-left: 12px; color: #ddd; }
.anchor { display: flex; align-items: center; gap: 6px; padding-left: 28px; }
.add { display: flex; align-items: center; gap: 3px; padding-left: 72px; white-space: nowrap; }
.value { padding-left: 6px; color: #c8900c; }
.value button { line-height: 13px; border-bottom: 1px dotted #c8900c; }

.time-area { position: relative; border-left: 1px solid #181818; overflow: hidden; }
.navigator { display: flex; justify-content: space-between; height: 11px; margin-top: 5px; background: #7a7a7a; border: 1px solid #181818; border-radius: 5px 5px 0 0; }
.navigator i { width: 6px; background: repeating-linear-gradient(90deg, #c8920a 0 2px, #5c4200 2px 3px); border-radius: 4px 0 0 0; }
.navigator i + i { border-radius: 0 4px 0 0; }
.ruler { display: flex; height: 19px; margin-left: -29px; font: 11px/18px "DejaVu Sans Condensed", "Noto Sans", sans-serif; }
.ruler span { position: relative; flex: 0 0 25%; height: 27px; text-align: center; }
.ruler span::after { content: ""; position: absolute; left: 50%; top: 17px; height: 10px; border-left: 1px solid #999; }
.workarea { display: flex; height: 16px; background: #2c2c2c; }
.workarea i { width: 6px; margin-right: 1px; background: repeating-linear-gradient(90deg, #c8920a 0 2px, #5c4200 2px 3px); }
.track { height: 24px; padding: 0 3% 0 6px; border-bottom: 1px solid #363636; }
.cache { height: 3px; background: #12b51c; }
.bar { height: 17px; margin-top: 2px; background: #4657a3; border: 1px solid #5f70bd; }
.keys { height: 19px; border-bottom: 1px solid #363636; }
.playhead { position: absolute; left: 71.5%; top: 6px; bottom: 0; width: 1px; background: #e01010; }
.playhead svg { position: absolute; left: -6px; top: 14px; }
.playhead b { position: absolute; left: -4px; top: 69px; font: 14px/16px "Liberation Mono", monospace; color: #eee; }
.playhead b + b { top: 88px; }
.side { display: flex; flex-direction: column; align-items: center; border-left: 1px solid #181818; }
.marker { margin-top: 36px; }
.cbtn { margin: 8px 0 3px; }
.sidebar { flex: 1; align-self: stretch; background: #363636; border-top: 1px solid #1c1c1c; color: #707070; padding: 5px 2px; }
.tlfoot { display: grid; grid-template-columns: minmax(0, 265fr) 116px minmax(0, 243fr) minmax(0, 148fr) 16px; align-items: center; height: 19px; border-top: 1px solid #1c1c1c; }
.modes { display: flex; gap: 4px; padding-left: 4px; }
.boxed { outline: 1px solid #151515; }
.toggle { height: 14px; line-height: 12px; font-size: 11px; border: 1px solid #181818; background: linear-gradient(#4b4b4b, #3a3a3a); }
.zoomer { display: flex; align-items: center; justify-content: flex-end; gap: 11px; padding-right: 4px; }
.zoomer input { width: 48px; height: 10px; background: linear-gradient(transparent 4px, #111 4px 7px, transparent 7px); }
.zoomer input::-webkit-slider-thumb { appearance: none; width: 8px; height: 9px; background: #333; border: 1px solid #111; border-radius: 4px 4px 0 0; }
.tlfoot .hscroll { color: #707070; margin-left: 0; }

/* right rail */
.rail { flex: 0 0 206px; display: flex; flex-direction: column; gap: 4px; }
.prev { height: 31px; }
.stub { height: 2px; margin: 8px 20px 0 12px; background: repeating-linear-gradient(90deg, #999 0 2px, transparent 2px 14px, #777 14px 18px, transparent 18px 25px); }
.small { height: 27px; }
.audio { height: 51px; }
.levels { display: flex; height: 30px; padding: 8px 9px 0; gap: 11px; overflow: hidden; align-items: flex-start; font-size: 10px; line-height: 14px; }
.meter { flex: none; display: flex; flex-wrap: wrap; gap: 5px 1px; width: 25px; height: 26px; border-top: 4px solid #000; padding-top: 3px; }
.meter i { width: 12px; height: 18px; background: linear-gradient(#80302a, #7a6a1c); }
.zero { margin-top: 2px; margin-right: 18px; }
.levels svg { margin-top: 6px; }
.db { white-space: nowrap; }
.effects { flex: 0 0 364px; border: 1px solid #c28a00; border-top: 0; }
.effects .tabs { border-bottom-color: #c28a00; }
.effects .tab { border: 1px solid #c28a00; border-bottom: 0; margin-left: -1px; }
.effects .wide { margin: 3px 5px 2px; }
.browser { flex: 1 1 0; min-height: 0; display: flex; overflow: hidden; border: 1px solid #1c1c1c; border-width: 1px 0; }
.browser ul { flex: 1; margin: 0; padding: 0; list-style: none; }
.browser li { display: flex; align-items: center; height: 17px; padding-left: 69px; border-bottom: 1px solid #363636; white-space: nowrap; }
.browser li span { padding: 0 4px 0 3px; line-height: 15px; }
.browser li svg { width: 13px; height: 14px; }
.browser .group { padding-left: 37px; gap: 4px; }
.browser .group svg { width: 14px; height: 11px; }
.browser .group .tw { width: 8px; height: 6px; color: #999; }
.browser .sel { background: #505050; }
.browser .sel span { background: #b4b4b4; color: #000; }
.browser .vscroll { justify-content: flex-start; width: 17px; color: #aaa; }
.browser .thumbbar { width: 16px; height: 49px; margin: 26% 0 auto; background: #454545; border: 1px solid #151515; }
.browser .vscroll .thumbbar { margin-top: 77px; }
.efoot { flex: none; height: 16px; display: flex; align-items: center; justify-content: flex-end; padding-right: 24px; }

/* overlays */
.arrow { position: absolute; left: 667px; top: 315px; width: 240px; height: 216px; pointer-events: none; }
.watermark { position: absolute; right: 51px; bottom: 15px; width: 186px; height: 92px; overflow: visible; fill: #fff; opacity: .78; pointer-events: none; }
.wm-bai { font: bold 43px "Liberation Sans", sans-serif; }
.wm-du { font: bold 27px "Liberation Sans", sans-serif; fill: #444; }
.wm-cn { font: bold 32px "Noto Sans CJK SC", sans-serif; }
.wm-url { font: 21px "Noto Sans", sans-serif; }
```
